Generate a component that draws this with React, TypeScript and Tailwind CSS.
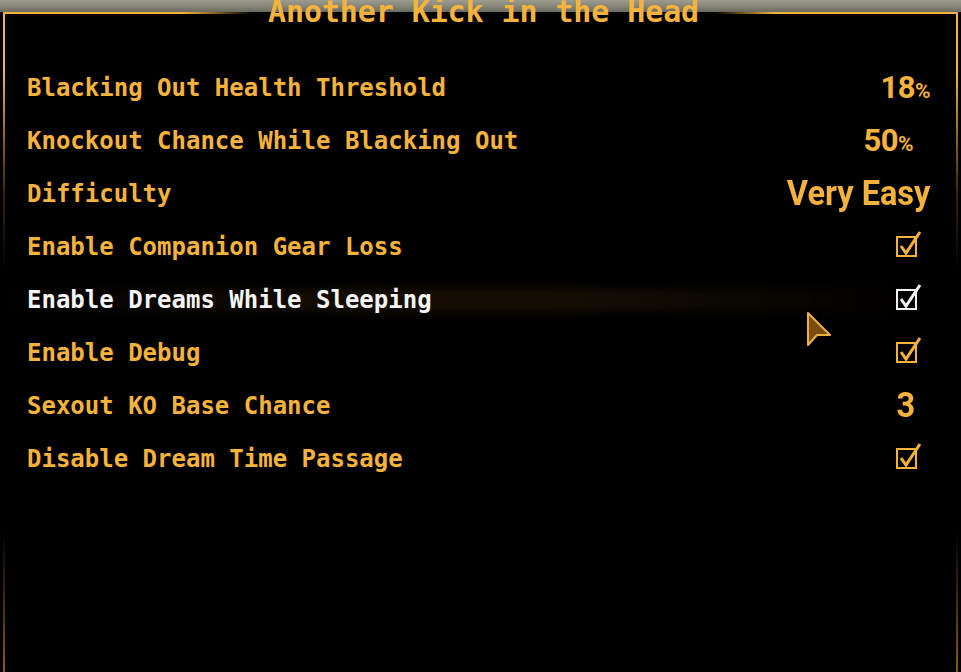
import React from 'react';

type Row = {
  label: string;
  kind: 'percent' | 'text' | 'check';
  value?: string;
  pad: string; // right padding of the value, written out in full
  active?: boolean;
};

const rows: Row[] = [
  { label: 'Blacking Out Health Threshold', kind: 'percent', value: '18', pad: 'pr-[26px]' },
  { label: 'Knockout Chance While Blacking Out', kind: 'percent', value: '50', pad: 'pr-[43px]' },
  { label: 'Difficulty', kind: 'text', value: 'Very Easy', pad: 'pr-[26px]' },
  { label: 'Enable Companion Gear Loss', kind: 'check', pad: 'pr-[34px]' },
  { label: 'Enable Dreams While Sleeping', kind: 'check', pad: 'pr-[34px]', active: true },
  { label: 'Enable Debug', kind: 'check', pad: 'pr-[34px]' },
  { label: 'Sexout KO Base Chance', kind: 'text', value: '3', pad: 'pr-[41px]' },
  { label: 'Disable Dream Time Passage', kind: 'check', pad: 'pr-[34px]' },
];

const Check: React.FC<{ white?: boolean }> = ({ white }) => {
  const c = white ? '#f2f2f2' : '#f6b33c';
  return (
    <svg width="26" height="28" viewBox="0 0 26 28" className="block">
      <rect x="1" y="7" width="19" height="19" fill="none" stroke={c} strokeWidth="2" />
      <path d="M5 16 L10 23 L24 2" fill="none" stroke={c} strokeWidth="3" strokeLinejoin="miter" />
    </svg>
  );
};

const Cursor: React.FC = () => (
  <svg width="26" height="36" viewBox="0 0 26 36" className="absolute left-[806px] top-[311px]">
    <path d="M2 2 L2 34 L11 24 L24 24 Z" fill="#7a4c10" stroke="#f0b03e" strokeWidth="2" strokeLinejoin="round" />
  </svg>
);

const App: React.FC = () => {
  return (
    <div className="relative w-[961px] h-[672px] bg-black overflow-hidden text-[#f6b33c]">
      {/* header: grey band with broken amber line around the title */}
      <div className="flex h-[30px] bg-[linear-gradient(to_bottom,#9c9c8e_0px,#86867a_6px,#6a6a60_12px,#000_12px,#000_30px)]">
        <div className="w-[3px]" />
        <div className="mt-[12px] h-[2px] w-[250px] bg-[linear-gradient(to_right,#f6b33c_0%,#f6b33c_72%,transparent_100%)]" />
        <div className="w-[15px]" />
        <div className="-mt-[6px] font-['DejaVu_Sans_Mono',monospace] font-bold text-[30px] leading-[36px] tracking-[-0.1px] whitespace-nowrap">
          Another Kick in the Head
        </div>
        <div className="w-[15px]" />
        <div className="mt-[12px] h-[2px] flex-1 bg-[linear-gradient(to_right,transparent_0%,#f6b33c_25%,#f6b33c_100%)]" />
        <div className="w-[3px]" />
      </div>

      {/* side borders of the frame */}
      <div className="absolute left-[3px] top-[12px] w-[2px] h-[660px] bg-[linear-gradient(to_bottom,#f6b33c_0px,#f6b33c_60px,#3a2608_180px,transparent_260px,transparent_520px,#8a5a18_660px)]" />
      <div className="absolute right-[3px] top-[12px] w-[2px] h-[660px] bg-[linear-gradient(to_bottom,#f6b33c_0px,#f6b33c_60px,#3a2608_180px,transparent_260px,transparent_520px,#8a5a18_660px)]" />

      <div className="flex flex-col pt-[31px] pl-[27px] pr-[5px]">
        {rows.map((r) => (
          <div key={r.label} className="relative flex items-center justify-between h-[53px]">
            {r.active && (
              <div className="absolute -left-[27px] right-[30px] top-[15px] h-[24px] blur-[4px] bg-[linear-gradient(to_right,transparent_0%,rgba(70,45,12,0.3)_40%,rgba(70,45,12,0.3)_60%,transparent_100%)]" />
            )}
            <span
              className={`relative font-['DejaVu_Sans_Mono',monospace] font-bold text-[24px] leading-none whitespace-nowrap ${
                r.active ? 'text-[#f4f4f4]' : 'text-[#f6b33c]'
              }`}
            >
              {r.label}
            </span>
            <div className={`relative flex items-center ${r.pad}`}>
              {r.kind === 'percent' && (
                <span className="font-['Roboto',sans-serif] font-bold text-[31px] leading-none tracking-[-0.5px]">
                  {r.value}
                  <span className="text-[21px]">%</span>
                </span>
              )}
              {r.kind === 'text' && (
                <span className="inline-block origin-right scale-x-[0.93] font-['Roboto',sans-serif] font-bold text-[35px] leading-none">
                  {r.value}
                </span>
              )}
              {r.kind === 'check' && (
                <div className="-mt-[6px]">
                  <Check white={r.active} />
                </div>
              )}
            </div>
          </div>
        ))}
      </div>

      <Cursor />
    </div>
  );
};

export default App;
